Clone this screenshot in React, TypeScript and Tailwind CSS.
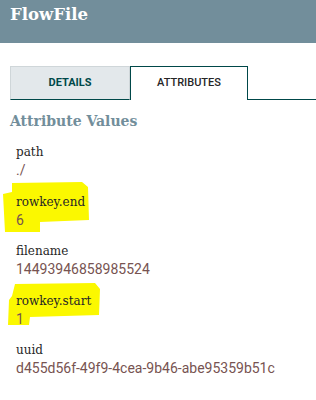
import React from "react";

const entries = [
  { label: "path", value: "./" },
  { label: "rowkey.end", value: "6" },
  { label: "filename", value: "14493946858985524" },
  { label: "rowkey.start", value: "1" },
  { label: "uuid", value: "d455d56f-49f9-4cea-9b46-abe95359b51c" },
];

export default function App() {
  return (
    <div className="relative w-[316px] h-[400px] bg-white overflow-hidden">
      <svg
        className="absolute left-0 top-0"
        width="316"
        height="400"
        viewBox="0 0 316 400"
      >
        <path
          d="M12,183 L82,182 L88,187 L89,220 L40,222 L40,232 L5,232 L3,194 L12,192 Z"
          fill="#fbf800"
        />
        <path
          d="M15,284 L95,283 L100,289 L99,315 L30,317 L29,325 L8,325 L9,300 L12,296 Z"
          fill="#fbf800"
        />
      </svg>
      <div className="relative">
        <div className="h-[43px] bg-[#728e9b] px-[10px] pt-[5px]">
          <div className="text-white font-bold text-[16.5px] leading-[20px] [font-family:'DejaVu_Serif',serif]">
            FlowFile
          </div>
        </div>
        <div className="mt-[23px] flex h-[34px] pl-[10px]">
          <div className="w-[120px] flex items-center justify-center bg-[#e3e8eb] border border-[#cfd6d9] border-b-[#004849] text-[#004849] font-bold text-[11px] [font-family:Roboto,sans-serif]">
            DETAILS
          </div>
          <div className="w-[118px] flex items-center justify-center bg-white border border-[#004849] border-b-0 text-[#262626] font-medium text-[11px] [font-family:Roboto,sans-serif]">
            ATTRIBUTES
          </div>
          <div className="flex-1 border-b border-[#004849]" />
        </div>
        <div className="mt-[12px] px-[10px] text-[#728e9b] font-bold text-[14px] leading-[18px] [font-family:'DejaVu_Serif',serif]">
          Attribute Values
        </div>
        <div className="mt-[14px] pl-[16px]">
          {entries.map((e) => (
            <div key={e.label} className="pb-[13.5px]">
              <div className="text-[#262626] text-[12px] leading-[17px] [font-family:'DejaVu_Serif',serif]">
                {e.label}
              </div>
              <div className="text-[#775351] text-[14px] leading-[19px] [font-family:Roboto,sans-serif]">
                {e.value}
              </div>
            </div>
          ))}
        </div>
      </div>
    </div>
  );
}
